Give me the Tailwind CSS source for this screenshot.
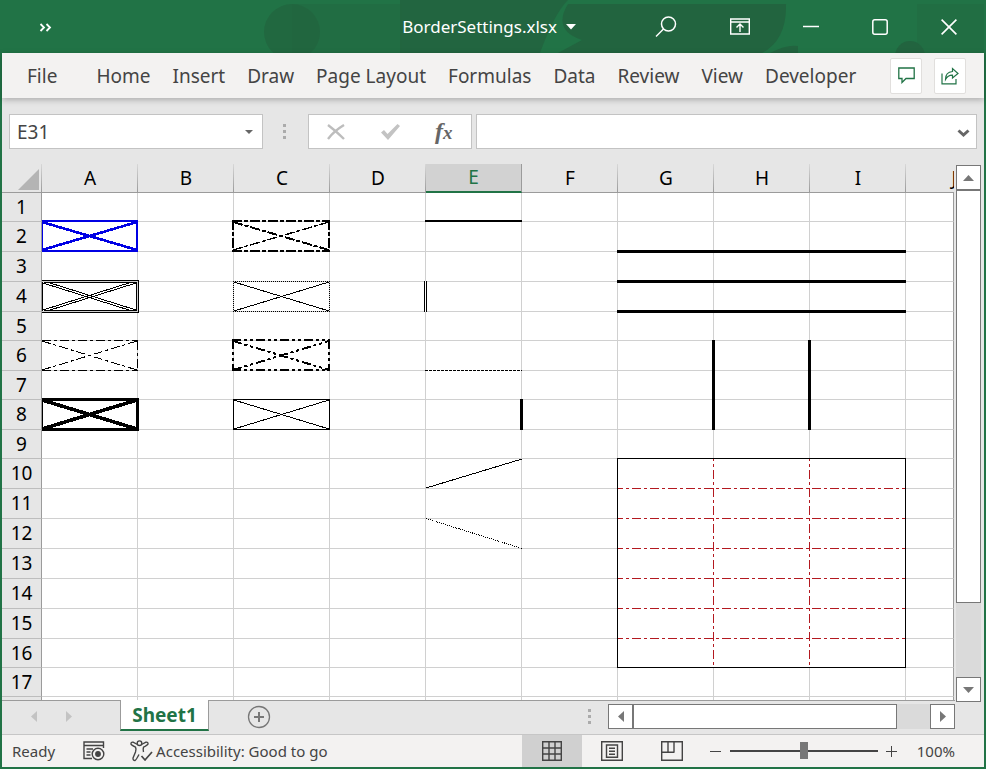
<!DOCTYPE html>
<html lang="en">
<head>
<meta charset="utf-8">
<title>BorderSettings.xlsx</title>
<script src="https://cdn.jsdelivr.net/npm/@tailwindcss/browser@4"></script>
</head>
<body class="h-screen overflow-hidden font-['Noto_Sans',sans-serif] text-[#444]">
<div class="flex h-full flex-col border-x-2 border-b-2 border-[#217346] bg-[#e6e6e6]">

  <!-- Title bar -->
  <header class="relative flex h-[53px] shrink-0 items-center overflow-hidden bg-[#217346] text-white">
    <svg class="absolute inset-0 h-full w-full" aria-hidden="true">
      <g fill="#22643f">
        <circle cx="290" cy="32" r="28" opacity=".75"/>
        <path d="M290 4H400V53H290Z" opacity=".4"/>
        <path d="M398 0H566Q552 14 538 53H398Z" opacity=".9"/>
        <path d="M566 4Q550 30 580 40L556 53H760Q785 40 784 4Z"/>
        <path d="M768 53Q785 44 796 46V53Z"/>
        <circle cx="908" cy="56" r="15"/>
        <path d="M915 4H984V53H915Z" opacity=".35"/>
      </g>
    </svg>
    <button class="relative ml-9 p-px" aria-label="More commands">
      <svg class="block" width="14" height="14" viewBox="0 0 14 14" fill="none" stroke="#fff" stroke-width="1.8"><path d="M1.5 4L5 7.5L1.5 11M7.500 4L11 7.500L7.500 11"/></svg>
    </button>
    <button class="relative ml-auto flex items-center gap-[9px] text-[17px] leading-6">
      <span>BorderSettings.xlsx</span>
      <svg width="10" height="6" viewBox="0 0 10 6" fill="#fff"><path d="M0 0H10L5 5.5Z"/></svg>
    </button>
    <div class="relative mr-[27px] ml-[79px] flex items-center gap-[53px]">
      <button aria-label="Search"><svg class="block" width="22" height="22" viewBox="0 0 22 22" fill="none" stroke="#fff" stroke-width="1.5"><circle cx="13.5" cy="8" r="7"/><path d="M8.5 13L1 20.5"/></svg></button>
      <button aria-label="Ribbon display options"><svg class="block" width="20" height="17" viewBox="0 0 20 17" fill="none" stroke="#fff" stroke-width="1.4"><path d="M.7 1H19.3V16H.7ZM.7 4H19.3M10 14V6.5M6.5 9.5L10 6L13.5 9.5"/></svg></button>
      <button aria-label="Minimize"><svg class="block" width="16" height="16" viewBox="0 0 16 16" stroke="#fff" stroke-width="1.5"><path d="M0 7.5H16"/></svg></button>
      <button aria-label="Maximize"><svg class="block" width="16" height="16" viewBox="0 0 16 16" fill="none" stroke="#fff" stroke-width="1.5"><rect x=".8" y=".8" width="14.4" height="14.4" rx="2"/></svg></button>
      <button aria-label="Close"><svg class="block" width="16" height="16" viewBox="0 0 16 16" stroke="#fff" stroke-width="1.6"><path d="M.6.6L15.4 15.4M15.4.6L.6 15.4"/></svg></button>
    </div>
  </header>

  <!-- Ribbon tabs -->
  <nav class="relative flex h-[45px] shrink-0 items-center bg-[#f3f2f1] pl-[25px] shadow-[0_2px_6px_rgba(0,0,0,0.25)]">
    <div class="flex gap-[22px] text-[19px] leading-7 whitespace-nowrap">
      <button class="mr-[17px]">File</button>
      <button>Home</button>
      <button>Insert</button>
      <button>Draw</button>
      <button>Page Layout</button>
      <button>Formulas</button>
      <button>Data</button>
      <button>Review</button>
      <button>View</button>
      <button>Developer</button>
    </div>
    <div class="mr-[18px] ml-auto flex gap-3">
      <button class="flex h-9 w-8 items-center justify-center rounded-xs border border-[#e1dfdd] bg-white" aria-label="Comments">
        <svg width="17" height="17" viewBox="0 0 17 17" fill="none" stroke="#217346" stroke-width="1.3"><path d="M.8 1H16.2V11.5H8L4 15.5V11.5H.8Z"/></svg>
      </button>
      <button class="flex h-9 w-8 items-center justify-center rounded-xs border border-[#e1dfdd] bg-white" aria-label="Share">
        <svg width="18" height="18" viewBox="0 0 18 18" fill="none" stroke="#217346" stroke-width="1.2"><path d="M1 6.5V16.8H15V12M4.5 12.5Q4.5 5 11.5 4.5V1.5L17 6.5L11.5 11V8.2Q7 8 4.5 12.5Z"/></svg>
      </button>
    </div>
  </nav>

  <!-- Formula bar -->
  <div class="flex h-[66px] shrink-0 items-start pt-4 pr-[7px] pl-[7px]">
    <div class="flex h-[35px] w-[254px] items-center border border-[#c3c3c3] bg-white pr-[9px] pl-[7px]">
      <input class="min-w-0 flex-1 text-[19px] leading-7 outline-none" aria-label="Name box" value="E31">
      <button aria-label="Open name list"><svg class="block" width="8" height="4" viewBox="0 0 8 4" fill="#666"><path d="M0 0H8L4 4Z"/></svg></button>
    </div>
    <svg class="mt-[10px] ml-[20px]" width="3" height="15" viewBox="0 0 3 15" fill="#ababab" aria-hidden="true"><path d="M0 0H3V3H0ZM0 6H3V9H0ZM0 12H3V15H0Z"/></svg>
    <div class="ml-[22px] flex h-[35px] w-[164px] items-center border border-[#c3c3c3] bg-white pl-[18px]">
      <button aria-label="Cancel"><svg class="block" width="18" height="16" viewBox="0 0 18 16" stroke="#bdbdbd" fill="none" stroke-width="2.4"><path d="M1 1Q9 7 17 15M17 1Q7 7 1 15"/></svg></button>
      <button class="ml-9" aria-label="Enter"><svg class="block" width="19" height="16" viewBox="0 0 19 16" fill="#c3c3c3"><path d="M0 8.500L3 6L6.500 10L16.500 0L19 2L7 16Z"/></svg></button>
      <button class="ml-[35px] font-['Liberation_Serif',serif] text-[24px] leading-7 font-bold text-[#666] italic" aria-label="Insert function">f<span class="text-[19px]">x</span></button>
    </div>
    <div class="ml-[4px] flex h-[35px] min-w-0 flex-1 items-center border border-[#c3c3c3] bg-white pr-[6px]">
      <input class="min-w-0 flex-1 px-2 text-[19px] leading-7 outline-none" aria-label="Formula bar">
      <button aria-label="Expand formula bar"><svg class="mt-1 block" width="13" height="9" viewBox="0 0 13 9" fill="none" stroke="#666" stroke-width="3"><path d="M1.5 1.5L6.5 6L11.5 1.5"/></svg></button>
    </div>
  </div>

  <!-- Worksheet -->
  <main class="flex min-h-0 flex-1">
    <div class="relative min-w-0 flex-1 overflow-hidden">
      <table class="w-full table-fixed border-separate border-spacing-0 text-[19px] leading-[27px] text-black">
        <thead><tr id="cols"></tr></thead>
        <tbody id="rows"></tbody>
      </table>
      <!-- Cell borders, drawn over the grid lines -->
      <svg class="pointer-events-none absolute top-[29px] right-0 bottom-0 left-10 h-full w-[calc(100%-40px)]" shape-rendering="crispEdges" fill="none" stroke="#000" aria-hidden="true">
        <g transform="translate(-42 -193)">
          <g stroke="#0000e4" stroke-width="2">
            <path d="M42 221H138M42 251H138M42 220V252M137 220V252"/>
            <path stroke-width="2.6" d="M42 222L137 250M42 250L137 222"/>
          </g>
          <g>
            <path d="M42 280.5H139M42 312.5H139M138.500 280V313M44 282.500H137M44 310.500H137M42.500 282V311M136.500 282V311"/>
            <path d="M47 282L136 310M43 283L132 311M132 282L43 310M136 283L47 311"/>
          </g>
          <g stroke-dasharray="9 3 3 3">
            <path d="M42 340.500H138M42 370.500H138M137.500 341V371"/>
            <path d="M42 341L137 370M42 370L137 341"/>
          </g>
          <g stroke-width="3">
            <path d="M42 399.500H139M42 429.500H139M137.500 398V431"/>
            <path stroke-width="2" d="M42 398V431"/>
            <path stroke-width="3.600" d="M42 400L137 429M42 429L137 400"/>
          </g>
          <g stroke-width="2" stroke-dasharray="10 2 4 2">
            <path d="M232 221H330M232 251H330M233 220V252M329 220V252"/>
            <path d="M233 222L329 250"/>
            <path stroke-width="1.400" d="M233 250L329 222"/>
          </g>
          <path stroke-dasharray="1 1" d="M233 281.500H330M233 311.500H330M233.500 281V312M329.500 281V312"/>
          <path d="M234 282L329 311M234 311L329 282"/>
          <g stroke-width="2" stroke-dasharray="9 3 3 3 3 3">
            <path d="M232 340H330M232 370H330M233 340V371M329 340V371"/>
            <path d="M233 341L329 370M233 370L329 341"/>
          </g>
          <path d="M233 399.500H330M233 429.500H330M233.500 399V430M329.500 399V430M234 400L329 429M234 429L329 400"/>
          <path stroke-width="2" d="M425 221H522"/>
          <path d="M424.500 281V312M426.500 281V312"/>
          <path stroke="#fff" d="M425 370.500H522M425.500 281V312"/>
          <path stroke-dasharray="3 1" d="M425 370.500H522"/>
          <path stroke-width="3" d="M521.500 399V430M617 251.500H906M617 281.500H906M617 311.500H906M713.500 340V430M809.500 340V430"/>
          <path d="M426 488L522 459"/>
          <path stroke-dasharray="1 1" d="M426 518.500L522 548.500"/>
          <path stroke="#fff" d="M618 488.500H905M618 518.500H905M618 548.500H905M618 578.500H905M618 608.500H905M618 638.500H905M713.500 459V667M809.500 459V667"/>
          <g stroke="#b31920">
            <path stroke-dasharray="9 3 3 3" stroke-dashoffset="3" d="M617 488.500H905M617 518.500H905M617 548.500H905M617 578.500H905M617 608.500H905M617 638.500H905"/>
            <path stroke-dasharray="9 3 3 3" stroke-dashoffset="7" d="M713.500 459V667M809.500 459V667"/>
          </g>
          <path d="M617.500 458.500H905.500V667.500H617.500Z"/>
        </g>
      </svg>
    </div>
    <div class="relative z-10 mt-px mr-[3px] -mb-[2px] ml-[2px] flex w-[25px] shrink-0 flex-col bg-[#dadada]">
      <button class="flex h-[25px] shrink-0 items-center justify-center border border-[#777] bg-white" aria-label="Scroll up"><svg width="11" height="6" viewBox="0 0 11 6" fill="#777"><path d="M0 6H11L5.500 0Z"/></svg></button>
      <div class="h-[413px] shrink border border-[#777] bg-white"></div>
      <button class="mt-auto flex h-[25px] shrink-0 items-center justify-center border border-[#777] bg-white" aria-label="Scroll down"><svg width="11" height="6" viewBox="0 0 11 6" fill="#777"><path d="M0 0H11L5.500 6Z"/></svg></button>
    </div>
  </main>

  <!-- Sheet tabs and horizontal scroll bar -->
  <div class="flex h-[35px] shrink-0 items-start border-b border-[#c6c6c6]">
    <div class="flex h-full min-w-0 flex-1 items-start border-t border-[#9b9b9b]">
      <button class="mt-[10px] ml-[29px]" aria-label="Previous sheet"><svg class="block" width="6" height="11" viewBox="0 0 6 11" fill="#c3c3c3"><path d="M6 0V11L0 5.500Z"/></svg></button>
      <button class="mt-[10px] ml-[29px]" aria-label="Next sheet"><svg class="block" width="6" height="11" viewBox="0 0 6 11" fill="#c3c3c3"><path d="M0 0V11L6 5.500Z"/></svg></button>
      <button class="-mt-px ml-12 h-[31px] w-[89px] border-x border-b-2 border-x-[#9b9b9b] border-b-[#217346] bg-white text-[19px] leading-7 font-bold text-[#217346]">Sheet1</button>
      <button class="mt-1 ml-[38px]" aria-label="New sheet"><svg class="block" width="24" height="24" viewBox="0 0 24 24" fill="none" stroke="#777"><circle cx="12" cy="12" r="10.500" stroke-width="1.300"/><path stroke-width="2" d="M7 12H17M12 7V17"/></svg></button>
      <svg class="mt-2 mr-[17px] ml-auto" width="3" height="15" viewBox="0 0 3 15" fill="#ababab" aria-hidden="true"><path d="M0 0H3V3H0ZM0 6H3V9H0ZM0 12H3V15H0Z"/></svg>
      <div class="mt-[3px] flex h-[25px] w-[347px] bg-[#dadada]">
        <button class="flex w-[25px] items-center justify-center border border-[#777] bg-white" aria-label="Scroll left"><svg width="6" height="11" viewBox="0 0 6 11" fill="#777"><path d="M6 0V11L0 5.500Z"/></svg></button>
        <div class="w-[264px] border border-[#777] bg-white"></div>
        <button class="ml-auto flex w-[25px] items-center justify-center border border-[#777] bg-white" aria-label="Scroll right"><svg width="6" height="11" viewBox="0 0 6 11" fill="#777"><path d="M0 0V11L6 5.500Z"/></svg></button>
      </div>
    </div>
    <div class="w-[29px] shrink-0"></div>
  </div>

  <!-- Status bar -->
  <footer class="flex h-8 shrink-0 items-center bg-[#f3f2f1] pl-[10px] text-[15px] leading-5">
    <span>Ready</span>
    <button class="ml-[28px]" aria-label="Record macro"><svg class="block" width="22" height="20" viewBox="0 0 22 20" fill="none" stroke="#444" stroke-width="1.400"><path d="M9 17.500H1V1H20.500V7M1 4.500H20.500M3.500 8H10M3.500 11H7.500M3.500 14H7.500"/><circle cx="15" cy="13" r="5.800"/><circle cx="15" cy="13" r="2.200" fill="#444"/></svg></button>
    <button class="ml-[25px] flex items-center gap-[3px]">
      <svg width="23" height="22" viewBox="0 0 23 22" fill="none" stroke="#444" stroke-width="1.400" stroke-linejoin="round"><circle cx="9.500" cy="3.200" r="2.300"/><path d="M7.500 4.500L3 2.200Q.8 1.800 1 4Q1.200 5 5.500 7.200Q6.500 9 5.500 12L3 18Q2.800 20.500 5 20.500Q6 20.200 9 14.500M11.500 4.500L16 2.200Q18.200 1.800 18 4Q17.600 5 13.500 7.200Q12.800 9 13.500 12"/><path stroke-width="1.700" d="M11.500 16L15 20L22 12"/></svg>
      <span>Accessibility: Good to go</span>
    </button>
    <div class="ml-auto flex h-full">
      <button class="flex w-[60px] items-center justify-center bg-[#d0d0d0]" aria-label="Normal view"><svg width="20" height="20" viewBox="0 0 20 20" fill="none" stroke="#444" stroke-width="1.400"><path d="M.7.7H19.300V19.300H.7ZM.7 7H19.300M.7 13H19.300M7 .7V19.300M13 .7V19.300"/></svg></button>
      <button class="flex w-[60px] items-center justify-center" aria-label="Page layout view"><svg width="22" height="20" viewBox="0 0 22 20" fill="none" stroke="#444" stroke-width="1.400"><path d="M.7.7H21.300V19.300H.7ZM5.500 4H16.500V16.300H5.500ZM8 7.200H14M8 10.200H14M8 13.200H14"/></svg></button>
      <button class="flex w-[60px] items-center justify-center" aria-label="Page break preview"><svg width="22" height="20" viewBox="0 0 22 20" fill="none" stroke="#444" stroke-width="1.400"><path d="M.7.7H21.300V19.300H.7ZM7 .7V11M13 .7V11M.7 11.200H13.500"/></svg></button>
    </div>
    <button class="ml-2" aria-label="Zoom out"><svg class="block" width="11" height="11" viewBox="0 0 11 11" stroke="#444"><path d="M0 5.500H11"/></svg></button>
    <input type="range" min="0" max="100" value="50" aria-label="Zoom" class="ml-[9px] h-5 w-[148px] appearance-none bg-transparent [&::-webkit-slider-runnable-track]:h-[2px] [&::-webkit-slider-runnable-track]:bg-[#444] [&::-webkit-slider-thumb]:-mt-[8px] [&::-webkit-slider-thumb]:h-[17px] [&::-webkit-slider-thumb]:w-[8px] [&::-webkit-slider-thumb]:appearance-none [&::-webkit-slider-thumb]:bg-[#777]">
    <button class="ml-2" aria-label="Zoom in"><svg class="block" width="11" height="11" viewBox="0 0 11 11" stroke="#444"><path d="M0 5.500H11M5.500 0V11"/></svg></button>
    <button class="mr-[29px] ml-[20px]">100%</button>
  </footer>
</div>
<script>
  const head = 'h-[29px] border-b border-[#9b9b9b] p-0 pt-px font-normal overflow-hidden';
  const line = '<span class="absolute top-0 right-0 h-full w-px bg-linear-to-b from-[#d8d8d8] to-[#9b9b9b]"></span>';
  let html = `<th class="${head} relative w-10"><svg class="absolute right-[3px] bottom-[2px]" width="21" height="21" viewBox="0 0 21 21" fill="#b4b4b4"><path d="M21 0V21H0Z"/></svg>${line}</th>`;
  for (const c of 'ABCDEFGHI') {
    html += c === 'E'
      ? '<th scope="col" class="relative h-[29px] w-24 border-r border-b-2 border-r-[#9b9b9b] border-b-[#217346] bg-[#d2d2d2] p-0 font-normal text-[#217346]">E</th>'
      : `<th scope="col" class="${head} relative w-24">${c}${line}</th>`;
  }
  html += `<th scope="col" class="${head}"><div class="w-24">J</div></th>`;
  document.getElementById('cols').innerHTML = html;

  const short = [1, 5, 7, 9, 16, 17];
  let rows = '';
  for (let r = 1; r <= 18; r++) {
    const h = short.includes(r) ? 'h-[29px]' : 'h-[30px]';
    rows += `<tr><th scope="row" class="${h} border-r border-b border-r-[#9b9b9b] border-b-[#bdbdbd] p-0 font-normal">${r < 18 ? r : ''}</th>`
      + '<td class="border-r border-b border-[#d0d0d0] bg-white p-0"></td>'.repeat(9)
      + '<td class="border-r border-b border-r-[#9b9b9b] border-b-[#d0d0d0] bg-white p-0"></td></tr>';
  }
  document.getElementById('rows').innerHTML = rows;
</script>
</body>
</html>
